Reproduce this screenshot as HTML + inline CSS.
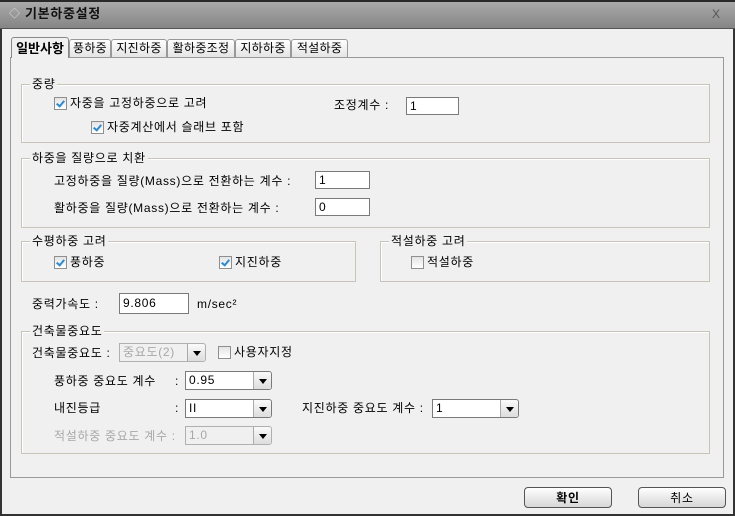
<!DOCTYPE html><html><head><meta charset="utf-8"><style>
body{margin:0;width:735px;height:516px;overflow:hidden;background:#f0f0f0;font-family:"Liberation Sans","Noto Sans CJK KR","NanumGothic",sans-serif;font-size:12px;color:#000;position:relative;letter-spacing:0.7px}
.a{position:absolute}
.t{position:absolute;white-space:nowrap;line-height:14px}
.g{position:absolute;border:1px solid #c8c4b8;box-shadow:inset 1px 1px 0 #fff}
.gl{position:absolute;background:#f0f0f0;padding:0 2px;line-height:14px;top:-8px;left:8px}
.cb{position:absolute;width:11px;height:11px;border:1px solid #8f8f8f;background:linear-gradient(#e4e4e4,#fff)}
.cb.c::after{content:"";position:absolute;left:3px;top:1px;width:3px;height:6px;border:solid #2a8ad4;border-width:0 2px 2px 0;transform:rotate(40deg)}
.in{position:absolute;border:1px solid #7a7a7a;background:#fff;height:18px;box-sizing:border-box;padding-left:3px;line-height:16px}
.cmb{position:absolute;height:19px;box-sizing:border-box;border:1px solid #7a7a7a;background:#fff;border-radius:0 3px 3px 0;line-height:17px;padding-left:3px}
.cmb .ar{position:absolute;right:0;top:0;width:17px;height:17px;border-left:1px solid #aaa;background:linear-gradient(#fafafa,#ddd);border-radius:0 3px 3px 0}
.cmb .ar::after{content:"";position:absolute;left:5px;top:7px;border:4px solid transparent;border-top:5px solid #000;border-bottom:0}
.dis{color:#a8a8a8}
.cmb.d{background:#f0f0f0;border-color:#b0b0b0}
.btn{position:absolute;height:21px;border:1px solid #555;border-radius:4px;background:linear-gradient(#fff,#e6e6e6 60%,#d8d8d8);text-align:center;line-height:20px;box-sizing:border-box}
.tab{position:absolute;top:39px;height:18px;border:1px solid #999;border-bottom:none;background:linear-gradient(#fff,#e4e4e4);line-height:17px;border-radius:3px 3px 0 0;text-align:center;box-sizing:border-box;letter-spacing:0.3px}
</style></head><body>
<div class="a" style="left:0;top:0;width:735px;height:29px;background:linear-gradient(#aaa,#858585);border-top:2px solid #2a2a2a;box-sizing:border-box;border-bottom:1px solid #555"></div>
<div class="t" style="left:9px;top:7px;color:#ddd;font-size:11px">◇</div>
<div class="t" style="left:25px;top:7px;font-weight:bold;font-size:13px;color:#111">기본하중설정</div>
<div class="t" style="left:712px;top:7px;color:#555;font-size:12px">X</div>
<div class="a" style="left:0;top:29px;width:2px;height:487px;background:#333"></div>
<div class="a" style="left:733px;top:29px;width:2px;height:487px;background:#333"></div>
<div class="a" style="left:0;top:514px;width:735px;height:2px;background:#333"></div>

<div class="a" style="left:10px;top:57px;width:714px;height:421px;border:1px solid #999;box-sizing:border-box"></div>
<div class="tab" style="left:11px;top:37px;width:58px;height:21px;font-weight:bold;font-size:13px;background:#f0f0f0;border-color:#888;line-height:21px;letter-spacing:0">일반사항</div>
<div class="tab" style="left:69px;width:42px">풍하중</div>
<div class="tab" style="left:111px;width:56px">지진하중</div>
<div class="tab" style="left:167px;width:68px">활하중조정</div>
<div class="tab" style="left:235px;width:56px">지하하중</div>
<div class="tab" style="left:291px;width:57px">적설하중</div>

<div class="g" style="left:21px;top:84px;width:687px;height:57px"><span class="gl">중량</span></div>
<div class="cb c" style="left:54px;top:97px"></div><div class="t" style="left:70px;top:96px">자중을 고정하중으로 고려</div>
<div class="cb c" style="left:91px;top:121px"></div><div class="t" style="left:107px;top:120px">자중계산에서 슬래브 포함</div>
<div class="t" style="left:334px;top:98px">조정계수 :</div>
<div class="in" style="left:406px;top:97px;width:53px">1</div>

<div class="g" style="left:21px;top:158px;width:687px;height:68px"><span class="gl">하중을 질량으로 치환</span></div>
<div class="t" style="left:54px;top:174px">고정하중을 질량(Mass)으로 전환하는 계수 :</div>
<div class="in" style="left:315px;top:171px;width:55px">1</div>
<div class="t" style="left:54px;top:201px">활하중을 질량(Mass)으로 전환하는 계수 :</div>
<div class="in" style="left:315px;top:198px;width:55px">0</div>

<div class="g" style="left:21px;top:241px;width:333px;height:39px"><span class="gl">수평하중 고려</span></div>
<div class="cb c" style="left:54px;top:256px"></div><div class="t" style="left:70px;top:255px">풍하중</div>
<div class="cb c" style="left:219px;top:256px"></div><div class="t" style="left:235px;top:255px">지진하중</div>
<div class="g" style="left:380px;top:241px;width:328px;height:39px"><span class="gl">적설하중 고려</span></div>
<div class="cb" style="left:411px;top:256px"></div><div class="t" style="left:427px;top:255px">적설하중</div>

<div class="t" style="left:32px;top:297px">중력가속도 :</div>
<div class="in" style="left:119px;top:293px;width:70px;height:21px;line-height:19px">9.806</div>
<div class="t" style="left:197px;top:297px">m/sec²</div>

<div class="g" style="left:21px;top:331px;width:687px;height:121px"><span class="gl">건축물중요도</span></div>
<div class="t" style="left:32px;top:346px">건축물중요도 :</div>
<div class="cmb d dis" style="left:119px;top:343px;width:87px">중요도(2)<span class="ar"></span></div>
<div class="cb" style="left:218px;top:346px"></div><div class="t" style="left:234px;top:345px">사용자지정</div>
<div class="t" style="left:54px;top:374px">풍하중 중요도 계수</div><div class="t" style="left:175px;top:374px">:</div>
<div class="cmb" style="left:185px;top:371px;width:87px">0.95<span class="ar"></span></div>
<div class="t" style="left:54px;top:401px">내진등급</div><div class="t" style="left:175px;top:401px">:</div>
<div class="cmb" style="left:185px;top:399px;width:87px">II<span class="ar"></span></div>
<div class="t" style="left:302px;top:401px">지진하중 중요도 계수 :</div>
<div class="cmb" style="left:432px;top:399px;width:87px">1<span class="ar"></span></div>
<div class="t dis" style="left:54px;top:429px">적설하중 중요도 계수 :</div>
<div class="cmb d dis" style="left:185px;top:426px;width:87px">1.0<span class="ar"></span></div>

<div class="btn" style="left:524px;top:487px;width:88px;font-weight:bold">확인</div>
<div class="btn" style="left:638px;top:487px;width:88px">취소</div>
</body></html>
